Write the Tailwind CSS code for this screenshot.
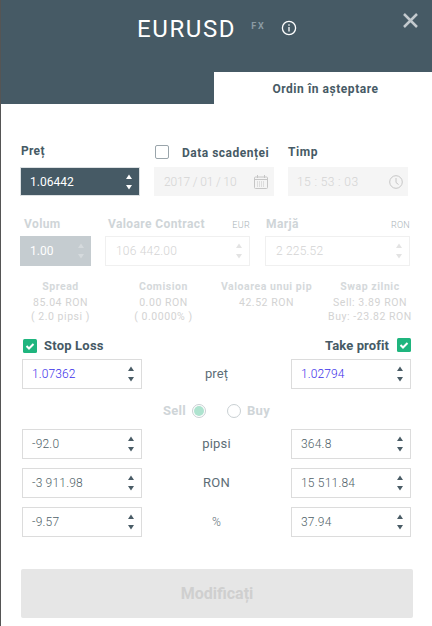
<!DOCTYPE html>
<html>
<head>
<meta charset="utf-8">
<script src="https://cdn.jsdelivr.net/npm/@tailwindcss/browser@4"></script>
</head>
<body class="bg-white font-[Roboto,sans-serif] text-[#465a65] overflow-hidden">
<div class="w-[432px] h-[626px] border-l border-[#555] relative overflow-hidden">

  <!-- header -->
  <div class="bg-[#465a65] h-[104px] relative">
    <div class="flex items-center h-[58px] pl-[136px]">
      <span class="text-white text-[24px] font-normal tracking-[1.6px] leading-none">EURUSD</span>
      <span class="text-[#8b9aa3] text-[9px] font-bold tracking-[2px] ml-[15px] -mt-[4px]">FX</span>
      <svg class="ml-[15px] -mt-[2px]" width="16" height="16" viewBox="0 0 16 16" fill="none" stroke="#fff" stroke-width="1.3"><circle cx="8" cy="8" r="6.6"/><path d="M8 7v4.500"/><path d="M8 4.300v1.400"/></svg>
    </div>
    <svg class="absolute left-[402px] top-[13px]" width="15" height="15" viewBox="0 0 15 15" stroke="#c3cace" stroke-width="2.500"><path d="M1 1l13 13M14 1L1 14"/></svg>
    <div class="absolute left-[213px] top-[72px] w-[219px] h-[32px] bg-white flex items-center justify-center text-[12px] font-bold tracking-[0.55px] pt-[1px] pl-[4px]">Ordin în așteptare</div>
  </div>

  <!-- pret / data / timp -->
  <div class="flex mt-[38px] pl-[19px]">
    <div class="w-[120px]">
      <div class="h-[25px] text-[12px] font-bold tracking-[0.3px] pt-[2px] pl-[1px] leading-[14px]">Preț</div>
      <div class="h-[29px] bg-[#465a65] border border-[#dde1e3] text-white text-[12px] flex items-center justify-between pl-[9px] pr-[7px]">
        <span>1.06442</span>
        <svg width="6" height="16" viewBox="0 0 6 16" fill="#fff"><path d="M3 .5L6 5H0zM3 15.500L0 11h6z"/></svg>
      </div>
    </div>
    <div class="w-[120px] ml-[14px]">
      <div class="h-[25px] flex items-start">
        <span class="w-[14px] h-[14px] mt-[3px] ml-[1px] border border-[#9aa5ab] rounded-[2px] bg-white"></span>
        <span class="text-[12px] font-bold tracking-[0.5px] ml-[13px] mt-[4px] leading-[14px] whitespace-nowrap">Data scadenței</span>
      </div>
      <div class="h-[29px] bg-[#f5f5f5] text-[#d4d4d4] text-[12px] font-light flex items-center justify-between pl-[10px] pr-[6px]">
        <span class="-tracking-[0.15px]">2017 / 01 / 10</span>
        <svg width="14" height="14" viewBox="0 0 14 14" fill="none" stroke="#c6c6c6"><rect x="0.500" y="2" width="13" height="11.500" rx="1"/><path d="M3.500 0v3M10.500 0v3M.5 4.500h13"/><path stroke-dasharray="1 1" d="M3 7h8M3 9h8M3 11h8"/></svg>
      </div>
    </div>
    <div class="w-[120px] ml-[14px]">
      <div class="h-[25px] text-[12px] font-bold tracking-[0.55px] pt-[3px] leading-[14px]">Timp</div>
      <div class="h-[29px] bg-[#f5f5f5] text-[#d4d4d4] text-[12px] font-light flex items-center justify-between pl-[9px] pr-[5px]">
        <span class="tracking-[0.4px]">15 : 53 : 03</span>
        <svg width="14" height="14" viewBox="0 0 14 14" fill="none" stroke="#c6c6c6"><circle cx="7" cy="7" r="6.300"/><path d="M7 3v4.500l2.500 2"/></svg>
      </div>
    </div>
  </div>

  <!-- volum / valoare / marja -->
  <div class="flex mt-[21px] pl-[19px] text-[#cfd5d8]">
    <div class="w-[71px]">
      <div class="h-[19px] text-[12px] font-bold tracking-[0.4px] pl-[4px] leading-[14px]">Volum</div>
      <div class="h-[30px] bg-[#c5ccd0] text-white text-[12px] flex items-center justify-between pl-[10px] pr-[7px]">
        <span>1.00</span>
        <svg width="6" height="16" viewBox="0 0 6 16" fill="#d5dadd"><path d="M3 .5L6 5H0zM3 15.500L0 11h6z"/></svg>
      </div>
    </div>
    <div class="w-[145px] ml-[14px]">
      <div class="h-[19px] flex justify-between items-start leading-[14px]">
        <span class="text-[12px] font-bold tracking-[0.4px] pl-[3px]">Valoare Contract</span>
        <span class="text-[9px] font-light tracking-[0.3px] text-[#a9b2b7] mt-[1px]">EUR</span>
      </div>
      <div class="h-[30px] border border-[#f0f0f0] text-[#d4d4d4] text-[12px] font-light flex items-center justify-between pl-[10px] pr-[7px]">
        <span class="tracking-[0.2px]">106 442.00</span>
        <svg width="6" height="16" viewBox="0 0 6 16" fill="#e3e3e3"><path d="M3 .5L6 5H0zM3 15.500L0 11h6z"/></svg>
      </div>
    </div>
    <div class="w-[145px] ml-[15px]">
      <div class="h-[19px] flex justify-between items-start leading-[14px]">
        <span class="text-[12px] font-bold tracking-[0.4px] pl-[1px]">Marjă</span>
        <span class="text-[9px] font-light tracking-[0.3px] text-[#a9b2b7] mt-[1px]">RON</span>
      </div>
      <div class="h-[30px] border border-[#f0f0f0] text-[#d4d4d4] text-[12px] font-light flex items-center justify-between pl-[10px] pr-[7px]">
        <span class="tracking-[0.2px]">2 225.52</span>
        <svg width="6" height="16" viewBox="0 0 6 16" fill="#e3e3e3"><path d="M3 .5L6 5H0zM3 15.500L0 11h6z"/></svg>
      </div>
    </div>
  </div>

  <!-- info -->
  <div class="grid grid-cols-[103px_103px_103px_103px] ml-[8px] mt-[14px] text-center text-[10.5px] leading-[14px] tracking-[0.55px] text-[#d3d3d3]">
    <div><div class="font-bold text-[#d5d9db] mb-[2px]">Spread</div><div>85.04 RON</div><div>( 2.0 pipsi )</div></div>
    <div><div class="font-bold text-[#d5d9db] mb-[2px]">Comision</div><div>0.00 RON</div><div>( 0.0000% )</div></div>
    <div><div class="font-bold text-[#d5d9db] mb-[2px]">Valoarea unui pip</div><div>42.52 RON</div></div>
    <div class="pl-[1px]"><div class="font-bold text-[#d5d9db] mb-[2px]">Swap zilnic</div><div>Sell: 3.89 RON</div><div>Buy: -23.82 RON</div></div>
  </div>

  <!-- stop loss / take profit -->
  <div class="flex justify-between items-center ml-[22px] w-[388px] mt-[14px] h-[15px]">
    <div class="flex items-center">
      <svg width="14" height="14" viewBox="0 0 14 14"><rect width="14" height="14" rx="1.500" fill="#1fb57e"/><path d="M3.500 7l2.500 2.500 4.500-4.500" fill="none" stroke="#fff" stroke-width="2"/></svg>
      <span class="ml-[7px] text-[13px] font-bold tracking-[0.2px]">Stop Loss</span>
    </div>
    <div class="flex items-center">
      <span class="mr-[8px] text-[13px] font-bold tracking-[0.1px]">Take profit</span>
      <svg class="-mt-[1px]" width="14" height="14" viewBox="0 0 14 14"><rect width="14" height="14" rx="1.500" fill="#1fb57e"/><path d="M3.500 7l2.500 2.500 4.500-4.500" fill="none" stroke="#fff" stroke-width="2"/></svg>
    </div>
  </div>

  <div class="grid grid-cols-[120px_149px_120px] ml-[21px] mt-[6px] text-[12px] font-light tracking-[0.1px]">
    <div class="h-[30px] border border-[#dcdcdc] flex items-center justify-between pl-[9px] pr-[7px] text-[#3c30ea]">
      <span>1.07362</span>
      <svg width="6" height="16" viewBox="0 0 6 16" fill="#4a5c66"><path d="M3 .5L6 5H0zM3 15.500L0 11h6z"/></svg>
    </div>
    <div class="h-[30px] flex items-center justify-center text-[13px] font-normal text-[#5d6d76]">preț</div>
    <div class="h-[30px] border border-[#dcdcdc] flex items-center justify-between pl-[9px] pr-[7px] text-[#3c30ea]">
      <span>1.02794</span>
      <svg width="6" height="16" viewBox="0 0 6 16" fill="#4a5c66"><path d="M3 .5L6 5H0zM3 15.500L0 11h6z"/></svg>
    </div>
  </div>

  <!-- sell / buy -->
  <div class="flex items-center h-[14px] mt-[15px] ml-[162px] text-[13px] font-bold text-[#cfd5d8] tracking-[0.3px]">
    <span class="w-[24px]">Sell</span>
    <span class="ml-[5px] w-[14px] h-[14px] rounded-full border border-[#c9d0d3] flex items-center justify-center"><span class="w-[10px] h-[10px] rounded-full bg-[#aee3cf]"></span></span>
    <span class="ml-[21px] w-[14px] h-[14px] rounded-full border border-[#c9d0d3]"></span>
    <span class="ml-[6px]">Buy</span>
  </div>

  <div class="grid grid-cols-[120px_149px_120px] gap-y-[9px] ml-[21px] mt-[11px] text-[12px] font-light tracking-[0.2px] text-[#4f5f68]">
    <div class="h-[30px] border border-[#dcdcdc] flex items-center justify-between pl-[9px] pr-[7px]">
      <span>-92.0</span>
      <svg width="6" height="16" viewBox="0 0 6 16" fill="#4a5c66"><path d="M3 .5L6 5H0zM3 15.500L0 11h6z"/></svg>
    </div>
    <div class="h-[30px] flex items-center justify-center font-normal text-[13px] text-[#5d6d76]">pipsi</div>
    <div class="h-[30px] border border-[#dcdcdc] flex items-center justify-between pl-[9px] pr-[7px]">
      <span>364.8</span>
      <svg width="6" height="16" viewBox="0 0 6 16" fill="#4a5c66"><path d="M3 .5L6 5H0zM3 15.500L0 11h6z"/></svg>
    </div>
    <div class="h-[30px] border border-[#dcdcdc] flex items-center justify-between pl-[9px] pr-[7px]">
      <span>-3 911.98</span>
      <svg width="6" height="16" viewBox="0 0 6 16" fill="#4a5c66"><path d="M3 .5L6 5H0zM3 15.500L0 11h6z"/></svg>
    </div>
    <div class="h-[30px] flex items-center justify-center font-normal text-[13px] text-[#5d6d76]">RON</div>
    <div class="h-[30px] border border-[#dcdcdc] flex items-center justify-between pl-[9px] pr-[7px]">
      <span>15 511.84</span>
      <svg width="6" height="16" viewBox="0 0 6 16" fill="#4a5c66"><path d="M3 .5L6 5H0zM3 15.500L0 11h6z"/></svg>
    </div>
    <div class="h-[30px] border border-[#dcdcdc] flex items-center justify-between pl-[9px] pr-[7px]">
      <span>-9.57</span>
      <svg width="6" height="16" viewBox="0 0 6 16" fill="#4a5c66"><path d="M3 .5L6 5H0zM3 15.500L0 11h6z"/></svg>
    </div>
    <div class="h-[30px] flex items-center justify-center font-light text-[12px] text-[#5d6d76]">%</div>
    <div class="h-[30px] border border-[#dcdcdc] flex items-center justify-between pl-[9px] pr-[7px]">
      <span>37.94</span>
      <svg width="6" height="16" viewBox="0 0 6 16" fill="#4a5c66"><path d="M3 .5L6 5H0zM3 15.500L0 11h6z"/></svg>
    </div>
  </div>

  <!-- button -->
  <div class="ml-[20px] mt-[32px] w-[392px] h-[49px] bg-[#e6e6e6] rounded-[2px] flex items-center justify-center text-[16px] font-bold text-[#cfcfcf]">Modificați</div>
</div>
</body>
</html>
